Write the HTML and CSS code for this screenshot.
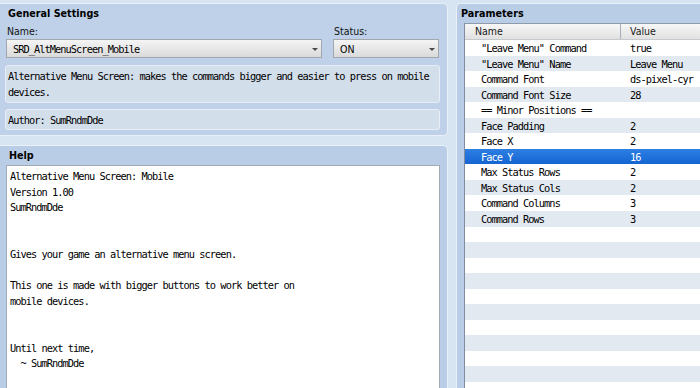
FILE: index.html
```html
<!DOCTYPE html>
<html lang="en">
<head>
    <meta charset="UTF-8">
    <meta name="viewport" content="width=device-width, initial-scale=1.0">
    <title>Plugin Settings</title>
    <link rel="stylesheet" href="styles.css">
</head>
<body>
    <div class="left-col">
        <section class="panel general">
            <h2 class="panel-title">General Settings</h2>
            <div class="fields">
                <div class="field field-name">
                    <label>Name:</label>
                    <div class="select"><span class="mono">SRD_AltMenuScreen_Mobile</span><span class="arrow"></span></div>
                </div>
                <div class="field field-status">
                    <label>Status:</label>
                    <div class="select"><span>ON</span><span class="arrow"></span></div>
                </div>
            </div>
            <div class="info-box mono">Alternative Menu Screen: makes the commands bigger and easier to press on mobile devices.</div>
            <div class="info-box author mono">Author: SumRndmDde</div>
        </section>

        <section class="panel help">
            <h2 class="panel-title">Help</h2>
            <pre class="help-text mono">
Alternative Menu Screen: Mobile
Version 1.00
SumRndmDde


Gives your game an alternative menu screen.

This one is made with bigger buttons to work better on
mobile devices.


Until next time,
  ~ SumRndmDde</pre>
        </section>
    </div>

    <section class="panel params">
        <h2 class="panel-title">Parameters</h2>
        <div class="param-table">
            <div class="param-head"><span class="col-name">Name</span><span class="col-value">Value</span></div>
            <div class="param-row mono"><span class="col-name">"Leave Menu" Command</span><span class="col-value">true</span></div>
            <div class="param-row mono"><span class="col-name">"Leave Menu" Name</span><span class="col-value">Leave Menu</span></div>
            <div class="param-row mono"><span class="col-name">Command Font</span><span class="col-value">ds-pixel-cyr</span></div>
            <div class="param-row mono"><span class="col-name">Command Font Size</span><span class="col-value">28</span></div>
            <div class="param-row mono"><span class="col-name">== Minor Positions ==</span><span class="col-value"></span></div>
            <div class="param-row mono"><span class="col-name">Face Padding</span><span class="col-value">2</span></div>
            <div class="param-row mono"><span class="col-name">Face X</span><span class="col-value">2</span></div>
            <div class="param-row mono selected"><span class="col-name">Face Y</span><span class="col-value">16</span></div>
            <div class="param-row mono"><span class="col-name">Max Status Rows</span><span class="col-value">2</span></div>
            <div class="param-row mono"><span class="col-name">Max Status Cols</span><span class="col-value">2</span></div>
            <div class="param-row mono"><span class="col-name">Command Columns</span><span class="col-value">3</span></div>
            <div class="param-row mono"><span class="col-name">Command Rows</span><span class="col-value">3</span></div>
            <div class="param-row"></div>
            <div class="param-row"></div>
            <div class="param-row"></div>
            <div class="param-row"></div>
            <div class="param-row"></div>
            <div class="param-row"></div>
            <div class="param-row"></div>
            <div class="param-row"></div>
            <div class="param-row"></div>
            <div class="param-row"></div>
            <div class="param-row"></div>
        </div>
    </section>
</body>
</html>
```

FILE: styles.css
```css
* {
    margin: 0;
    padding: 0;
    box-sizing: border-box;
}
body {
    background: #d7e4f2;
    display: flex;
    gap: 8px;
    padding-top: 3px;
    height: 388px;
    overflow: hidden;
    font: 10.5px/16px "DejaVu Sans Condensed", "DejaVu Sans", sans-serif;
    color: #111;
}
.mono {
    font-family: "DejaVu Sans Mono", monospace;
    font-size: 10.3px;
    letter-spacing: -0.94px;
}
.left-col {
    width: 448px;
    flex-shrink: 0;
    display: flex;
    flex-direction: column;
    gap: 9px;
}
.panel {
    background: #bed1e8;
    border: 1px solid #e9f0f8;
    border-radius: 5px;
}
.left-col .panel {
    border-left: none;
    border-top-left-radius: 0;
    border-bottom-left-radius: 0;
}
.panel-title {
    font-size: 10.7px;
    font-weight: bold;
    line-height: 16px;
    padding: 2px 0 0 3px;
    color: #000;
}

/* General settings */
.general {
    height: 133px;
    flex-shrink: 0;
    padding-left: 5px;
}
.fields {
    display: flex;
    gap: 11px;
    margin-top: 1px;
}
.field label {
    display: block;
    padding: 1px 0 0 1px;
    line-height: 15px;
}
.field-name {
    width: 316px;
    margin-left: 1px;
}
.field-status {
    width: 106px;
}
.select {
    height: 19px;
    border: 1px solid #a3a8ae;
    background: linear-gradient(#f5f5f5, #dadada);
    display: flex;
    align-items: center;
    justify-content: space-between;
    padding: 0 3px 0 6px;
    color: #000;
}
.arrow {
    border-left: 3px solid transparent;
    border-right: 3px solid transparent;
    border-top: 3px solid #4a4a4a;
    margin-top: 1px;
}
.info-box {
    width: 435px;
    margin-top: 7px;
    background: #d3deeb;
    border: 1px solid #e8eef6;
    border-radius: 3px;
    padding: 2px 3px 2px 2px;
    line-height: 16px;
    color: #000;
}
.author {
    margin-top: 6px;
    padding-bottom: 1px;
}

/* Help */
.help {
    flex: 1;
    min-height: 0;
    overflow: hidden;
    padding-left: 6px;
    background: #bacde6;
    border-bottom: none;
    border-bottom-right-radius: 0;
}
.help-text {
    width: 434px;
    height: 240px;
    margin-top: 1px;
    background: #fff;
    border: 1px solid #a2abb5;
    padding: 3px 3px 2px;
    line-height: 15.6px;
    color: #000;
    white-space: pre;
}

/* Parameters */
.params {
    width: 260px;
    flex-shrink: 0;
    display: flex;
    flex-direction: column;
    overflow: hidden;
    background: #bacde6;
    border-bottom: none;
    border-bottom-right-radius: 0;
    border-bottom-left-radius: 0;
}
.params .panel-title {
    padding-left: 4px;
}
.param-table {
    flex: 1;
    min-height: 0;
    overflow: hidden;
    margin: 1px 0 0 7px;
    border-top: 1px solid #8d9bab;
    border-left: 1px solid #7f8d9d;
    background: #fff;
}
.param-head {
    display: flex;
    height: 16px;
    line-height: 15px;
    background: linear-gradient(#f7f7f7, #e1e1e1);
    border-bottom: 1px solid #c6cacf;
    color: #1a1a1a;
}
.col-name {
    width: 156px;
    flex-shrink: 0;
    padding-left: 16px;
}
.col-value {
    padding-left: 9px;
}
.param-head .col-name {
    padding-left: 10px;
    border-right: 1px solid #a9afb6;
}
.param-row {
    display: flex;
    flex-shrink: 0;
    height: 15.55px;
    padding-top: 1px;
    line-height: 14.55px;
    background: #fff;
    color: #000;
}
.param-row:nth-child(odd) {
    background: #e2e9f1;
}
.param-row.selected {
    background: linear-gradient(#2d7fe2, #1565d2);
    color: #fff;
}
```
